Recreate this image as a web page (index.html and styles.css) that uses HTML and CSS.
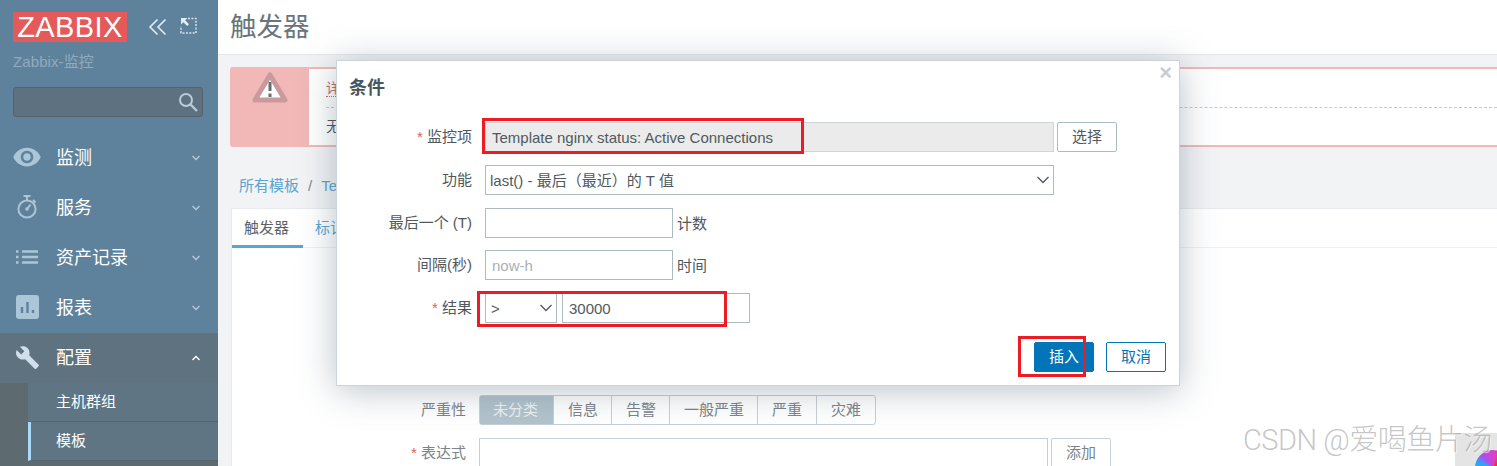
FILE: index.html
```html
<!DOCTYPE html>
<html lang="zh">
<head>
<meta charset="utf-8">
<title>触发器</title>
<link rel="stylesheet" href="styles.css">
</head>
<body>
<div class="page">
  <aside class="sidebar">
    <div class="brand">
      <span class="logo">ZABBIX</span>
      <svg class="ctl ctl-collapse" width="20" height="18" viewBox="0 0 20 18"><path d="M9.5 1.5 2 9l7.5 7.5M17.5 1.500 10 9l7.5 7.500" fill="none" stroke="#e3edf3" stroke-width="1.6"/></svg>
      <svg class="ctl ctl-expand" width="17" height="17" viewBox="0 0 17 17"><path d="M8 1.5h8v14.5H1V9" fill="none" stroke="#d6e2ea" stroke-width="1.5" stroke-dasharray="2 1.4"/><path d="M1 1h6.5L5.2 3.3 9 7.2 7.2 9 3.3 5.2 1 7.5z" fill="#e3edf3"/></svg>
    </div>
    <div class="server">Zabbix-监控</div>
    <div class="search">
      <svg width="22" height="22" viewBox="0 0 22 22"><circle cx="9" cy="9" r="6" fill="none" stroke="#b9ccd9" stroke-width="2"/><path d="m13.5 13.5 6.5 6.5" stroke="#b9ccd9" stroke-width="2.4"/></svg>
    </div>
    <nav class="nav">
      <div class="nav-item">
        <span class="nav-icon"><svg width="30" height="30" viewBox="0 0 24 24"><path fill="#abc6d7" d="M12 4.5C7 4.5 2.73 7.61 1 12c1.73 4.39 6 7.5 11 7.5s9.27-3.11 11-7.5c-1.73-4.39-6-7.5-11-7.5zM12 17c-2.76 0-5-2.24-5-5s2.24-5 5-5 5 2.24 5 5-2.24 5-5 5zm0-8c-1.66 0-3 1.34-3 3s1.34 3 3 3 3-1.34 3-3-1.34-3-3-3z"/></svg></span>
        <span class="nav-label">监测</span>
        <svg class="chev" width="10" height="6" viewBox="0 0 10 6"><path d="m1.5 1 3.5 3.5L8.5 1" fill="none" stroke="#b6cbd9" stroke-width="1.3"/></svg>
      </div>
      <div class="nav-item">
        <span class="nav-icon"><svg width="24" height="26" viewBox="0 0 24 26"><circle cx="12" cy="15" r="8.6" fill="none" stroke="#abc6d7" stroke-width="2"/><path d="M8.5 2h7M12 2v4M18 6l2.5 2.5" fill="none" stroke="#abc6d7" stroke-width="2"/><path d="m12 15 3.5-4.5" stroke="#abc6d7" stroke-width="2"/><circle cx="12" cy="15" r="1.8" fill="#abc6d7"/></svg></span>
        <span class="nav-label">服务</span>
        <svg class="chev" width="10" height="6" viewBox="0 0 10 6"><path d="m1.5 1 3.5 3.5L8.5 1" fill="none" stroke="#b6cbd9" stroke-width="1.3"/></svg>
      </div>
      <div class="nav-item">
        <span class="nav-icon"><svg width="24" height="14" viewBox="0 0 24 14"><path d="M1 1.5h2.5M1 7h2.5M1 12.5h2.5" stroke="#abc6d7" stroke-width="2.4"/><path d="M7 1.5h16M7 7h16M7 12.5h16" stroke="#abc6d7" stroke-width="2.4"/></svg></span>
        <span class="nav-label">资产记录</span>
        <svg class="chev" width="10" height="6" viewBox="0 0 10 6"><path d="m1.5 1 3.5 3.5L8.5 1" fill="none" stroke="#b6cbd9" stroke-width="1.3"/></svg>
      </div>
      <div class="nav-item">
        <span class="nav-icon"><svg width="23" height="24" viewBox="0 0 23 24"><rect width="23" height="24" rx="3" fill="#abc6d7"/><path d="M6 12v6M11.5 7v11M17 15v3" stroke="#5f829c" stroke-width="2.4"/></svg></span>
        <span class="nav-label">报表</span>
        <svg class="chev" width="10" height="6" viewBox="0 0 10 6"><path d="m1.5 1 3.5 3.5L8.5 1" fill="none" stroke="#b6cbd9" stroke-width="1.3"/></svg>
      </div>
      <div class="nav-item active">
        <span class="nav-icon"><svg width="25" height="25" viewBox="0 0 24 24"><path fill="#cfe0ec" d="M22.7 19l-9.1-9.1c.9-2.3.4-5-1.5-6.9-2-2-5-2.4-7.4-1.3L9 6 6 9 1.6 4.7C.4 7.1.9 10.1 2.9 12.1c1.9 1.9 4.6 2.4 6.9 1.5l9.1 9.1c.4.4 1 .4 1.4 0l2.3-2.3c.5-.4.5-1.1.1-1.4z"/></svg></span>
        <span class="nav-label">配置</span>
        <svg class="chev" width="10" height="6" viewBox="0 0 10 6"><path d="m1.5 5 3.5-3.5L8.5 5" fill="none" stroke="#fff" stroke-width="1.4"/></svg>
      </div>
      <div class="subnav">
        <div class="sub-item">主机群组</div>
        <div class="sub-item current">模板</div>
      </div>
    </nav>
  </aside>

  <main class="main">
    <header class="topbar"><h1 class="title">触发器</h1></header>
    <section class="msg">
      <div class="msg-icon">
        <svg width="36" height="32" viewBox="0 0 36 32"><path d="M18 3 33 28H3z" fill="#fff" stroke="#c99a9c" stroke-width="5" stroke-linejoin="round"/><path d="M18 10v9" stroke="#6b6b6b" stroke-width="3"/><path d="M18 21.500v3.500" stroke="#6b6b6b" stroke-width="3"/></svg>
      </div>
      <div class="msg-body">
        <div class="msg-row"><span class="msg-link">详</span></div>
        <div class="msg-row second">无</div>
      </div>
    </section>
    <div class="crumbs"><a>所有模板</a><span class="sep">/</span><a>Te</a></div>
    <section class="card">
      <div class="tabs">
        <span class="tab on">触发器</span>
        <span class="tab">标记</span>
      </div>
      <div class="form">
        <div class="form-row">
          <span class="form-label">严重性</span>
          <div class="seg">
            <span class="seg-item sel">未分类</span>
            <span class="seg-item">信息</span>
            <span class="seg-item">告警</span>
            <span class="seg-item">一般严重</span>
            <span class="seg-item">严重</span>
            <span class="seg-item">灾难</span>
          </div>
        </div>
        <div class="form-row">
          <span class="form-label"><i class="req">*</i> 表达式</span>
          <div class="expr"></div>
          <span class="btn-add">添加</span>
        </div>
      </div>
    </section>
  </main>
</div>

<div class="dialog">
  <span class="close">×</span>
  <h2 class="dialog-title">条件</h2>
  <div class="fields">
    <span class="label"><i class="req">*</i> 监控项</span>
    <div class="line">
      <input class="input ro wide" value="Template nginx status: Active Connections" readonly>
      <span class="btn-sel">选择</span>
    </div>
    <span class="label">功能</span>
    <div class="line">
      <div class="select wide"><span>last() - 最后（最近）的 T 值</span><svg width="14" height="8" viewBox="0 0 14 8"><path d="m1.500 1 5.500 5.500L12.500 1" fill="none" stroke="#4a5a62" stroke-width="1.300"/></svg></div>
    </div>
    <span class="label">最后一个 (T)</span>
    <div class="line">
      <input class="input mid" value="">
      <span class="unit">计数</span>
    </div>
    <span class="label">间隔(秒)</span>
    <div class="line">
      <input class="input mid" placeholder="now-h">
      <span class="unit">时间</span>
    </div>
    <span class="label"><i class="req">*</i> 结果</span>
    <div class="line result">
      <div class="select small"><span>&gt;</span><svg width="14" height="8" viewBox="0 0 14 8"><path d="m1.500 1 5.500 5.500L12.500 1" fill="none" stroke="#4a5a62" stroke-width="1.300"/></svg></div>
      <input class="input mid val" value="30000">
    </div>
  </div>
  <div class="dialog-foot">
    <span class="btn primary">插入</span>
    <span class="btn ghost">取消</span>
  </div>
</div>

<div class="mark mark-item"></div>
<div class="mark mark-result"></div>
<div class="mark mark-insert"></div>

<div class="corner"><div class="orb"></div></div>
<div class="watermark">CSDN @爱喝鱼片汤</div>
</body>
</html>
```
FILE: styles.css
```css
* { box-sizing: border-box; }
html, body { margin: 0; height: 100%; overflow: hidden; }
body {
  font-family: "Liberation Sans", "Noto Sans CJK SC", sans-serif;
  font-size: 15px;
  color: #4f5a60;
  background: #f2f3f5;
}
.page { display: flex; width: 1497px; height: 466px; overflow: hidden; }

/* sidebar */
.sidebar { width: 218px; flex: none; background: #5f829c; position: relative; z-index: 2; color: #fff; }
.brand { display: flex; align-items: center; padding: 12px 0 0 13px; height: 42px; }
.logo {
  width: 114px; height: 30px; background: #e45959; color: #fff;
  font-size: 29px; line-height: 30px; text-align: center; letter-spacing: 0.4px;
}
.ctl-collapse { margin-left: 21px; }
.ctl-expand { margin-left: 12px; margin-top: -4px; }
.server { margin: 10px 0 0 13px; height: 20px; line-height: 20px; font-size: 15px; letter-spacing: 0.1px; color: #8fabbf; }
.search {
  margin: 15px 15px 0 13px; height: 30px; background: #5e7180;
  border: 1px solid #54636e; border-radius: 3px;
  display: flex; justify-content: flex-end; align-items: center; padding-right: 3px;
}
.nav { margin-top: 16px; }
.nav-item { height: 50px; display: flex; align-items: center; position: relative; }
.nav-icon { width: 56px; flex: none; display: flex; justify-content: center; padding: 0 2px 2px 0; }
.nav-label { flex: 1; font-size: 18px; color: #fff; padding-bottom: 4px; }
.chev { margin-right: 17px; }
.nav-item.active { background: #5f7280; }
.subnav { height: 83px; padding-left: 28px; background: #5d6a70; }
.sub-item {
  height: 39px; line-height: 37px; padding-left: 28px; font-size: 15px; color: #fff;
  background: #607583; border-bottom: 1px solid #55656f;
}
.sub-item.current { padding-left: 25px; border-left: 3px solid #a9dafb; }

/* main */
.main { flex: 1; min-width: 0; }
.topbar { height: 55px; background: #fff; border-bottom: 1px solid #e5e8ea; padding-left: 12px; }
.title { margin: 0; font-size: 26.500px; font-weight: 400; line-height: 54px; color: #6a7479; }
.msg {
  margin: 12px 0 0 12px; height: 80px; display: flex;
  background: #f2b8b8; border-radius: 3px 0 0 3px;
}
.msg-icon { width: 79px; padding: 5px 0 0 1px; display: flex; justify-content: center; align-items: flex-start; }
.msg-body { flex: 1; margin: 2px 0; background: #fff; padding-left: 17px; }
.msg-row { height: 39px; line-height: 38px; font-size: 14px; color: #c76b6b; border-bottom: 1px dashed #f2b8b8; }
.msg-row.second { border: 0; color: #555; line-height: 36px; }
.msg-link { border-bottom: 1px dotted #c76b6b; }
.crumbs { margin: 29px 0 0 21px; height: 20px; line-height: 20px; font-size: 15px; color: #5ba4d0; white-space: nowrap; }
.crumbs .sep { margin: 0 9px; color: #7a8a90; }
.card { margin: 12px 0 0 13px; background: #fff; border: 1px solid #e7eaec; border-right: 0; height: 300px; }
.tabs { display: flex; height: 39px; border-bottom: 1px solid #eff1f2; }
.tab { height: 39px; padding: 0 12px; line-height: 37px; font-size: 15px; color: #5ba4d0; }
.tab.on { width: 71px; color: #5a6468; border-bottom: 3px solid #5aa5d4; }
.form { padding-top: 147px; }
.form-row { display: flex; align-items: flex-start; height: 43px; }
.form-label { width: 234px; text-align: right; line-height: 30px; font-size: 15px; color: #7a8489; }
.req { color: #e0605f; font-style: normal; }
.seg { display: flex; margin-left: 13px; height: 30px; border: 1px solid #c7d0d6; border-radius: 3px; }
.seg-item { padding: 0 14px; width: 58px; line-height: 28px; font-size: 15px; color: #7a8489; border-left: 1px solid #c7d0d6; white-space: nowrap; }
.seg-item:first-child { border-left: 0; }
.seg-item:nth-child(4) { width: 88px; }
.seg-item:nth-child(n+5) { width: 59px; }
.seg-item.sel { background: #b3c3cc; color: #eef2f4; width: 73px; padding: 0 13px; }
.expr { margin-left: 13px; width: 569px; height: 60px; border: 1px solid #c7d0d6; }
.btn-add { margin-left: 3px; width: 60px; height: 30px; line-height: 28px; text-align: center; font-size: 15px; color: #7a8489; border: 1px solid #c7d0d6; border-radius: 2px; }

/* dialog */
.dialog {
  position: absolute; left: 336px; top: 60px; width: 844px; height: 326px; z-index: 5;
  background: #fff; border: 1px solid #cdd4d9;
  box-shadow: 0 4px 34px rgba(60, 85, 105, 0.36);
}
.close { position: absolute; right: 7px; top: 2px; font-size: 22px; line-height: 20px; font-weight: 700; color: #c5ced4; }
.dialog-title { margin: 0; padding: 15px 0 0 12px; height: 61px; font-size: 18px; line-height: 24px; font-weight: 700; color: #45565f; }
.fields { display: grid; grid-template-columns: 135px 1fr; column-gap: 13px; row-gap: 12.750px; grid-auto-rows: 30px; }
.label { text-align: right; line-height: 30px; font-size: 15px; color: #50585c; }
.line { display: flex; align-items: stretch; }
.input {
  height: 30px; padding: 1px 6px 0; border: 1px solid #acbbc2; border-radius: 0; outline: 0; background: #fff;
  font: 15px "Liberation Sans", "Noto Sans CJK SC", sans-serif; color: #4f5a60;
}
.input::placeholder { color: #a9b0b4; opacity: 1; }
.wide { width: 569px; }
.mid { width: 188px; }
.ro { background: #ebebeb; border-color: #ced5d9; }
.btn-sel { margin-left: 3px; width: 60px; height: 30px; line-height: 28px; text-align: center; border: 1px solid #acbbc2; border-radius: 2px; font-size: 15px; color: #4f5a60; }
.select {
  height: 30px; padding: 0 3px 0 4px; border: 1px solid #acbbc2; background: #fff;
  display: flex; justify-content: space-between; align-items: center; font-size: 15px; color: #4f5a60;
}
.small { width: 72px; padding-left: 5px; padding-right: 3px; }
.val { margin-left: 5px; padding-top: 0; }
.unit { margin-left: 4px; line-height: 31px; font-size: 15px; color: #50585c; }
.dialog-foot { display: flex; justify-content: flex-end; gap: 12px; margin-top: 19px; padding-right: 13px; }
.btn { width: 60px; height: 30px; line-height: 28px; text-align: center; font-size: 15px; border-radius: 2px; border: 1px solid #0275b8; }
.primary { background: #0275b8; color: #fff; }
.ghost { background: #fff; color: #0275b8; }

/* image annotations */
.mark { position: absolute; border: 3px solid #ed1c24; z-index: 6; }
.mark-item { left: 482px; top: 118px; width: 322px; height: 36px; }
.mark-result { left: 477px; top: 291px; width: 250px; height: 36px; }
.mark-insert { left: 1018px; top: 336px; width: 68px; height: 41px; }

/* watermark */
.corner { position: absolute; right: 0; bottom: 0; width: 42px; height: 33px; background: #e4e4e4; overflow: hidden; z-index: 6; }
.orb {
  position: absolute; left: 20px; top: 17px; width: 36px; height: 36px; border-radius: 50%;
  background: conic-gradient(from 200deg, #28a8f0 0deg, #28a8f0 90deg, #b04cf0 120deg, #e040c0 170deg, #f03020 200deg, #28a8f0 360deg);
}
.watermark {
  position: absolute; left: 1243px; top: 421px; z-index: 7; white-space: nowrap;
  font-family: Roboto, "Noto Sans CJK SC", sans-serif; font-weight: 300; font-size: 29px; line-height: 38px; letter-spacing: -0.5px;
  color: rgba(150, 150, 150, 0.55); text-shadow: 1px 1px 1px rgba(255, 255, 255, 0.6);
}
```
